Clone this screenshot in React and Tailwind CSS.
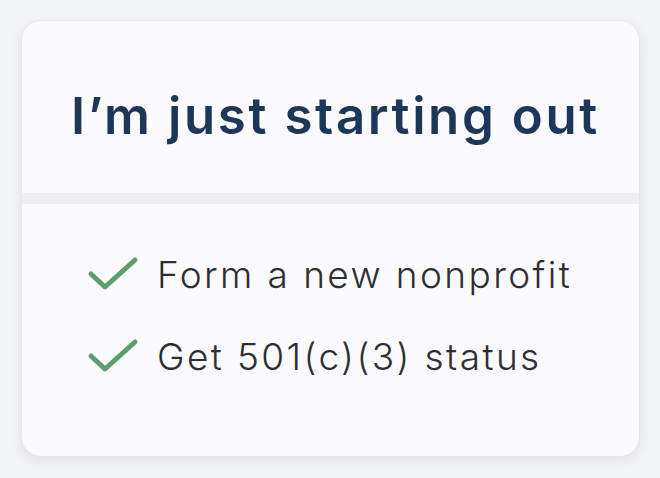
import React from 'react';

const items = ['Form a new nonprofit', 'Get 501(c)(3) status'];

const Check = () => (
    <svg width="52" height="36" viewBox="0 0 52 36" fill="none" className="shrink-0">
        <path d="M4 18 L18 31 L48 4" stroke="#5d9e6e" strokeWidth="5" strokeLinecap="round" strokeLinejoin="round" />
    </svg>
);

const App = () => {
    return (
        <div className="w-[660px] h-[478px] bg-[#f3f4f7] pt-[20px] pl-[21px]" style={{ fontFamily: 'Inter, "Open Sans", sans-serif' }}>
            <div className="w-[619px] h-[437px] bg-[#fbfbfd] rounded-[20px] border border-[#e4e6ec] shadow-[0_4px_12px_rgba(30,40,70,0.08)] overflow-hidden flex flex-col">
                <div className="h-[172px] flex items-center justify-center pt-[16px] pl-[10px]">
                    <h1 className="text-[51px] leading-none font-semibold text-[#1e3658] tracking-[2.6px] whitespace-nowrap">I’m just starting out</h1>
                </div>
                <div className="h-[11px] bg-[#eff0f4]" />
                <div className="flex flex-col gap-[42px] pl-[65px] pt-[50px]">
                    {items.map(item => (
                        <div key={item} className="flex items-center gap-[18px] h-[40px]">
                            <Check />
                            <span className="text-[37px] leading-none font-light text-[#2f2f33] tracking-[2.4px] whitespace-nowrap">{item}</span>
                        </div>
                    ))}
                </div>
            </div>
        </div>
    );
};

export default App;
